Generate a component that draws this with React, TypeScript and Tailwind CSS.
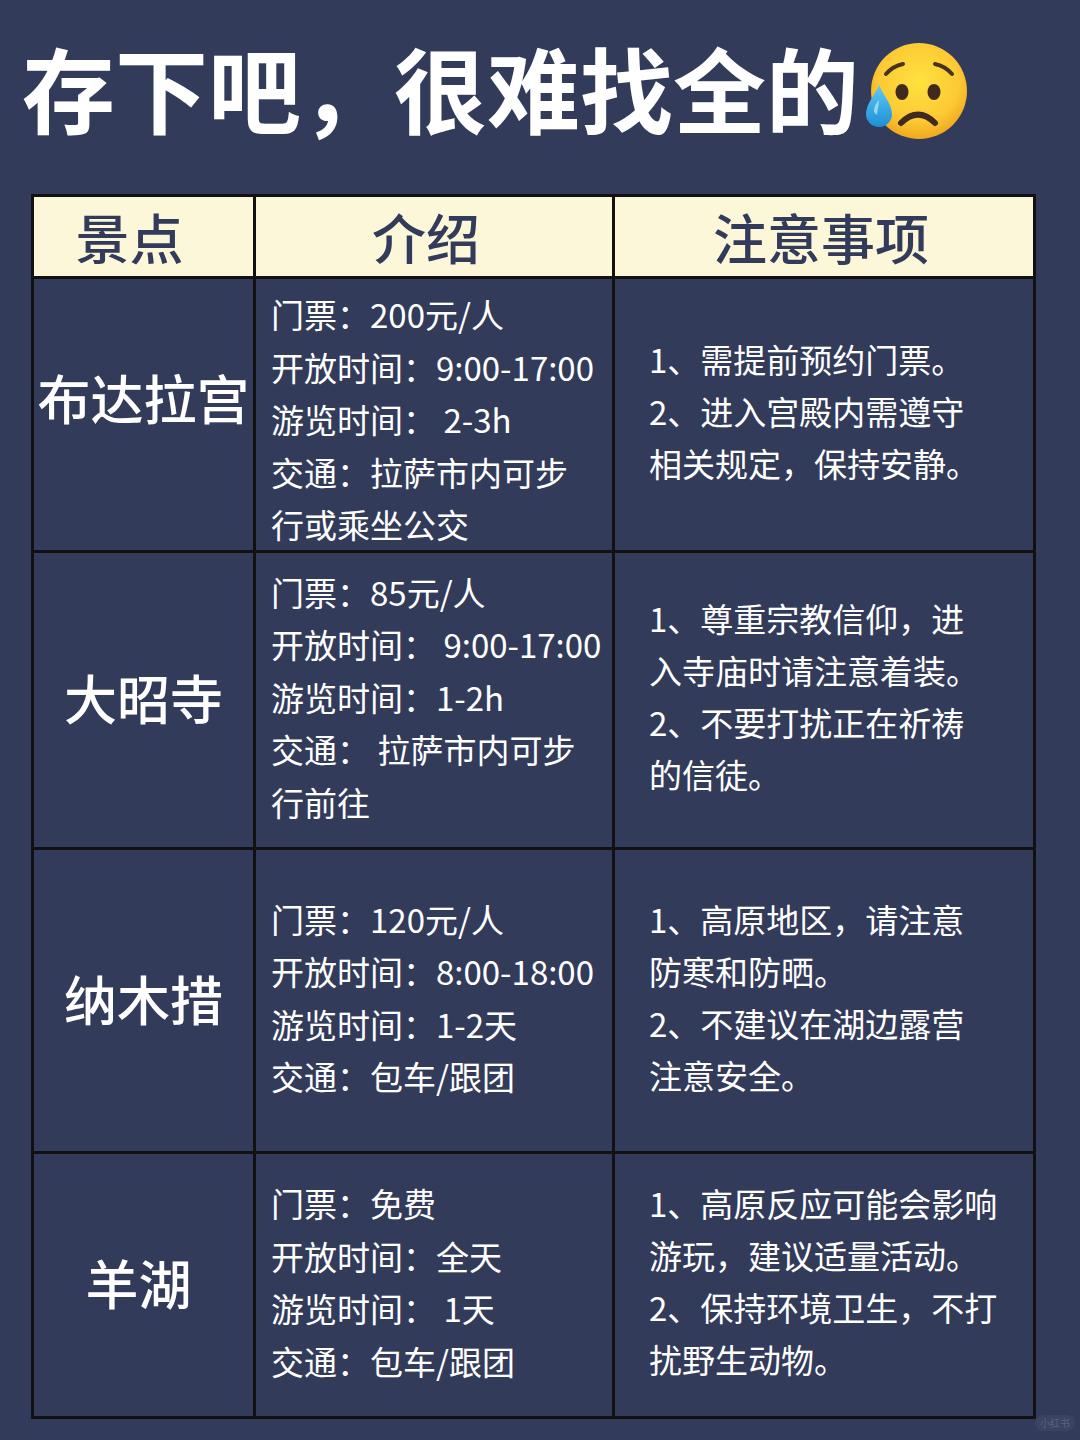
const rows = [
  {
    name: '布达拉宫',
    height: 'h-[274px]',
    nameShift: 'pb-[34px]',
    nameIndent: '',
    introShift: 'pt-[10px]',
    intro: ['门票：200元/人', '开放时间：9:00-17:00', '游览时间： 2-3h', '交通：拉萨市内可步', '行或乘坐公交'],
    notes: ['1、需提前预约门票。', '2、进入宫殿内需遵守', '相关规定，保持安静。'],
  },
  {
    name: '大昭寺',
    height: 'h-[297px]',
    nameShift: 'pb-[4px]',
    nameIndent: '',
    introShift: 'pb-[6px]',
    intro: ['门票：85元/人', '开放时间： 9:00-17:00', '游览时间：1-2h', '交通： 拉萨市内可步', '行前往'],
    notes: ['1、尊重宗教信仰，进', '入寺庙时请注意着装。', '2、不要打扰正在祈祷', '的信徒。'],
  },
  {
    name: '纳木措',
    height: 'h-[304px]',
    nameShift: 'pb-[4px]',
    nameIndent: '',
    introShift: 'pb-[6px]',
    intro: ['门票：120元/人', '开放时间：8:00-18:00', '游览时间：1-2天', '交通：包车/跟团'],
    notes: ['1、高原地区，请注意', '防寒和防晒。', '2、不建议在湖边露营', '注意安全。'],
  },
  {
    name: '羊湖',
    height: 'h-[262px]',
    nameShift: 'pb-[4px]',
    nameIndent: 'pr-[10px]',
    introShift: 'pb-[6px]',
    intro: ['门票：免费', '开放时间：全天', '游览时间： 1天', '交通：包车/跟团'],
    notes: ['1、高原反应可能会影响', '游玩，建议适量活动。', '2、保持环境卫生，不打', '扰野生动物。'],
  },
];

function SadFace() {
  return (
    <svg width="104" height="104" viewBox="0 0 104 104" className="shrink-0">
      <defs>
        <radialGradient id="face" cx="50%" cy="40%" r="60%">
          <stop offset="0%" stopColor="#ffe23f" />
          <stop offset="70%" stopColor="#fcc934" />
          <stop offset="100%" stopColor="#f0a81e" />
        </radialGradient>
        <linearGradient id="tear" x1="0" y1="0" x2="0" y2="1">
          <stop offset="0%" stopColor="#5fcaf5" />
          <stop offset="100%" stopColor="#1d8fd6" />
        </linearGradient>
      </defs>
      <circle cx="54" cy="51" r="48" fill="url(#face)" />
      <path d="M21 34 Q28 26 38 24" stroke="#4a3222" strokeWidth="4" fill="none" strokeLinecap="round" />
      <path d="M70 24 Q80 26 87 34" stroke="#4a3222" strokeWidth="4" fill="none" strokeLinecap="round" />
      <ellipse cx="37" cy="52" rx="6.5" ry="8" fill="#3f2a1d" />
      <ellipse cx="69" cy="52" rx="6.5" ry="8" fill="#3f2a1d" />
      <path d="M36 83 Q53 66 70 83" stroke="#3f2a1d" strokeWidth="6" fill="none" strokeLinecap="round" />
      <path d="M14 45 C18 55 27 64 27 74 A13 13 0 0 1 1 74 C1 64 10 55 14 45 Z" fill="url(#tear)" />
      <path d="M9 72 C9 66 12 62 14 60 C14 66 12 70 12 75 Z" fill="#aee6fb" opacity="0.8" />
    </svg>
  );
}

export default function App() {
  return (
    <div className="relative w-[1080px] h-[1440px] bg-[#333b5b] font-['Noto_Sans_CJK_SC','Noto_Sans',sans-serif]">
      <div className="h-[194px] pl-[22px] pt-[40px] flex items-start">
        <h1 className="text-[93px] leading-none font-bold text-white whitespace-nowrap">存下吧，很难找全的</h1>
        <div className="ml-[6px]">
          <SadFace />
        </div>
      </div>

      <div className="ml-[31px] w-[1005px] border-[3px] border-[#111]">
        <div className="flex h-[82px] bg-[#fdf7d9] border-b-[3px] border-[#111] text-[#333b5b] text-[54px] font-medium">
          <div className="w-[222px] border-r-[3px] border-[#111] flex items-center justify-center pr-[28px]">景点</div>
          <div className="w-[359px] border-r-[3px] border-[#111] flex items-center justify-center pr-[16px]">介绍</div>
          <div className="flex-1 flex items-center justify-center pr-[6px]">注意事项</div>
        </div>

        {rows.map((row, i) => (
          <div
            key={row.name}
            className={`flex ${row.height} ${i < rows.length - 1 ? 'border-b-[3px] border-[#111]' : ''} text-white`}
          >
            <div className={`w-[222px] border-r-[3px] border-[#111] flex items-center justify-center text-[53px] font-medium ${row.nameShift} ${row.nameIndent}`}>
              {row.name}
            </div>
            <div className={`w-[359px] border-r-[3px] border-[#111] flex flex-col justify-center pl-[15px] text-[33px] leading-[52.5px] ${row.introShift}`}>
              {row.intro.map((line) => (
                <div key={line} className="whitespace-pre">{line}</div>
              ))}
            </div>
            <div className="flex-1 flex flex-col justify-center pl-[34px] pb-[8px] text-[33px] leading-[52px]">
              {row.notes.map((line) => (
                <div key={line} className="whitespace-pre">{line}</div>
              ))}
            </div>
          </div>
        ))}
      </div>

      <div className="absolute left-[1035px] top-[1415px] h-[16px] px-[5px] rounded-full bg-[#3b4363] text-[10px] leading-[16px] text-[#5a6283]">
        小红书
      </div>
    </div>
  );
}
